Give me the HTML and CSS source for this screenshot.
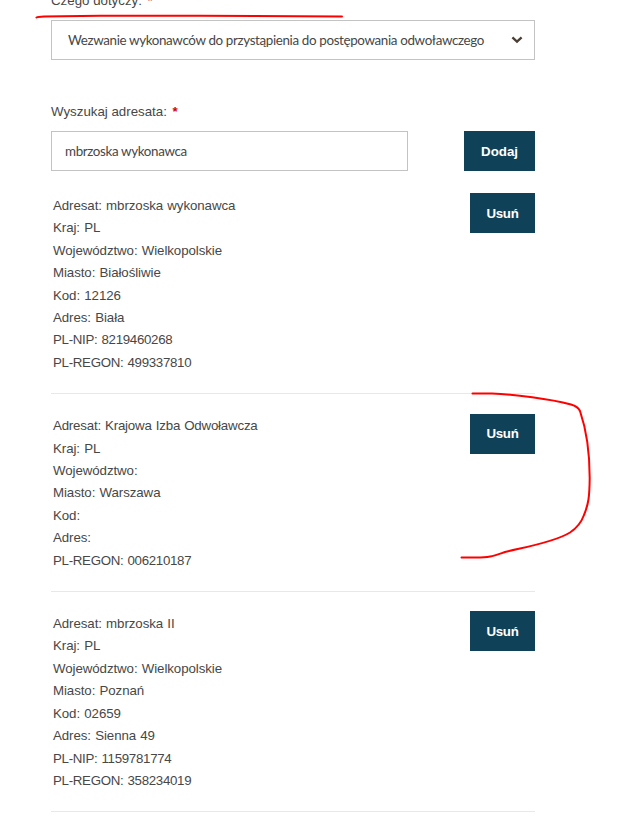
FILE: index.html
```html
<!DOCTYPE html>
<html lang="pl">
<head>
<meta charset="utf-8">
<title>Adresaci</title>
<link rel="stylesheet" href="styles.css">
</head>
<body>
<main class="form">
  <div class="label label-subject">Czego dotyczy: <span class="required">*</span></div>
  <div class="select">
    <span>Wezwanie wykonawców do przystąpienia do postępowania odwoławczego</span>
    <svg class="chevron" width="12" height="8" viewBox="0 0 12 8"><path d="M1.4 1.4 6 5.6 10.6 1.4" fill="none" stroke="#4a3f35" stroke-width="2.3"/></svg>
  </div>
  <div class="label label-search">Wyszukaj adresata: <span class="required">*</span></div>
  <div class="search">
    <div class="input">mbrzoska wykonawca</div>
    <button class="button button-add">Dodaj</button>
  </div>
  <section class="recipients">
    <article class="recipient">
      <div class="details">
        <div>Adresat: mbrzoska wykonawca</div>
        <div>Kraj: PL</div>
        <div>Województwo: Wielkopolskie</div>
        <div>Miasto: Białośliwie</div>
        <div>Kod: 12126</div>
        <div>Adres: Biała</div>
        <div class="number">PL-NIP: 8219460268</div>
        <div class="number">PL-REGON: 499337810</div>
      </div>
      <button class="button">Usuń</button>
    </article>
    <article class="recipient">
      <div class="details">
        <div class="institution">Adresat: Krajowa Izba Odwoławcza</div>
        <div>Kraj: PL</div>
        <div>Województwo:</div>
        <div>Miasto: Warszawa</div>
        <div>Kod:</div>
        <div>Adres:</div>
        <div class="number">PL-REGON: 006210187</div>
      </div>
      <button class="button">Usuń</button>
    </article>
    <article class="recipient">
      <div class="details">
        <div>Adresat: mbrzoska II</div>
        <div>Kraj: PL</div>
        <div>Województwo: Wielkopolskie</div>
        <div>Miasto: Poznań</div>
        <div>Kod: 02659</div>
        <div>Adres: Sienna 49</div>
        <div class="number">PL-NIP: 1159781774</div>
        <div class="number">PL-REGON: 358234019</div>
      </div>
      <button class="button">Usuń</button>
    </article>
  </section>
</main>
<svg class="markup" width="642" height="824" viewBox="0 0 642 824">
  <path d="M36.5 17.5Q38 16.6 44 16.4L100 15.8 200 15.8 342 16.4"/>
  <path d="M472.5 393.6H492C515 394.5 550 399 571 404.5Q578 406.500 580 411C586.500 430 589.700 452 589.700 478C589.500 497 588.500 504 584 515Q580 526 570 532.500C553 543 520 548 505 552C493 556 490 557.500 476 557.600H461.500"/>
</svg>
</body>
</html>
```
FILE: styles.css
```css
* { box-sizing: border-box; }

body {
  margin: 0;
  height: 824px;
  overflow: hidden;
  background: #fff;
  color: #474747;
  font: 13.3px/22.4px "Liberation Sans", Arial, sans-serif;
  letter-spacing: -0.08px;
}

.form {
  width: 484px;
  margin-left: 51px;
}

.label {
  height: 22px;
  letter-spacing: 0;
  white-space: pre;
}

.label-subject { margin-top: -10px; }
.label-search { margin-top: 41px; }

.required {
  margin-left: 2px;
  color: #d0021b;
  font-weight: bold;
}

.select, .input {
  display: flex;
  align-items: center;
  height: 40px;
  border: 1px solid #c3c3c3;
  font: 13.4px/20px Lato, sans-serif;
  letter-spacing: -0.36px;
}

.select {
  justify-content: space-between;
  margin-top: 8px;
  padding: 0 11px 0 16px;
  white-space: nowrap;
}

.search {
  display: flex;
  justify-content: space-between;
  margin-top: 8px;
}

.input { width: 357px; padding: 0 13px; }

.button {
  flex: none;
  width: 65px;
  height: 40px;
  padding: 1px 0 0;
  border: 0;
  background: #0f4259;
  color: #fff;
  font: bold 13.3px/20px "Liberation Sans", Arial, sans-serif;
  letter-spacing: -0.3px;
}

.button-add {
  width: 71px;
  letter-spacing: 0;
}

.recipients { margin-top: 2.4px; }

.recipient {
  display: flex;
  justify-content: space-between;
  align-items: flex-start;
  padding: 20px 0 20px 2px;
  border-bottom: 1px solid #e8e8e8;
}

.recipient:nth-child(2) { padding-bottom: 20.3px; }
.recipient:nth-child(3) { padding-top: 19.7px; }

.details {
  padding-top: 1.6px;
  margin-bottom: -1.6px;
  word-spacing: 0.6px;
}

.number { letter-spacing: -0.3px; }
.institution { letter-spacing: -0.2px; }

.markup {
  position: absolute;
  top: 0;
  left: 0;
  fill: none;
  stroke: #f00;
  stroke-width: 2;
  stroke-linecap: round;
  pointer-events: none;
}
```
